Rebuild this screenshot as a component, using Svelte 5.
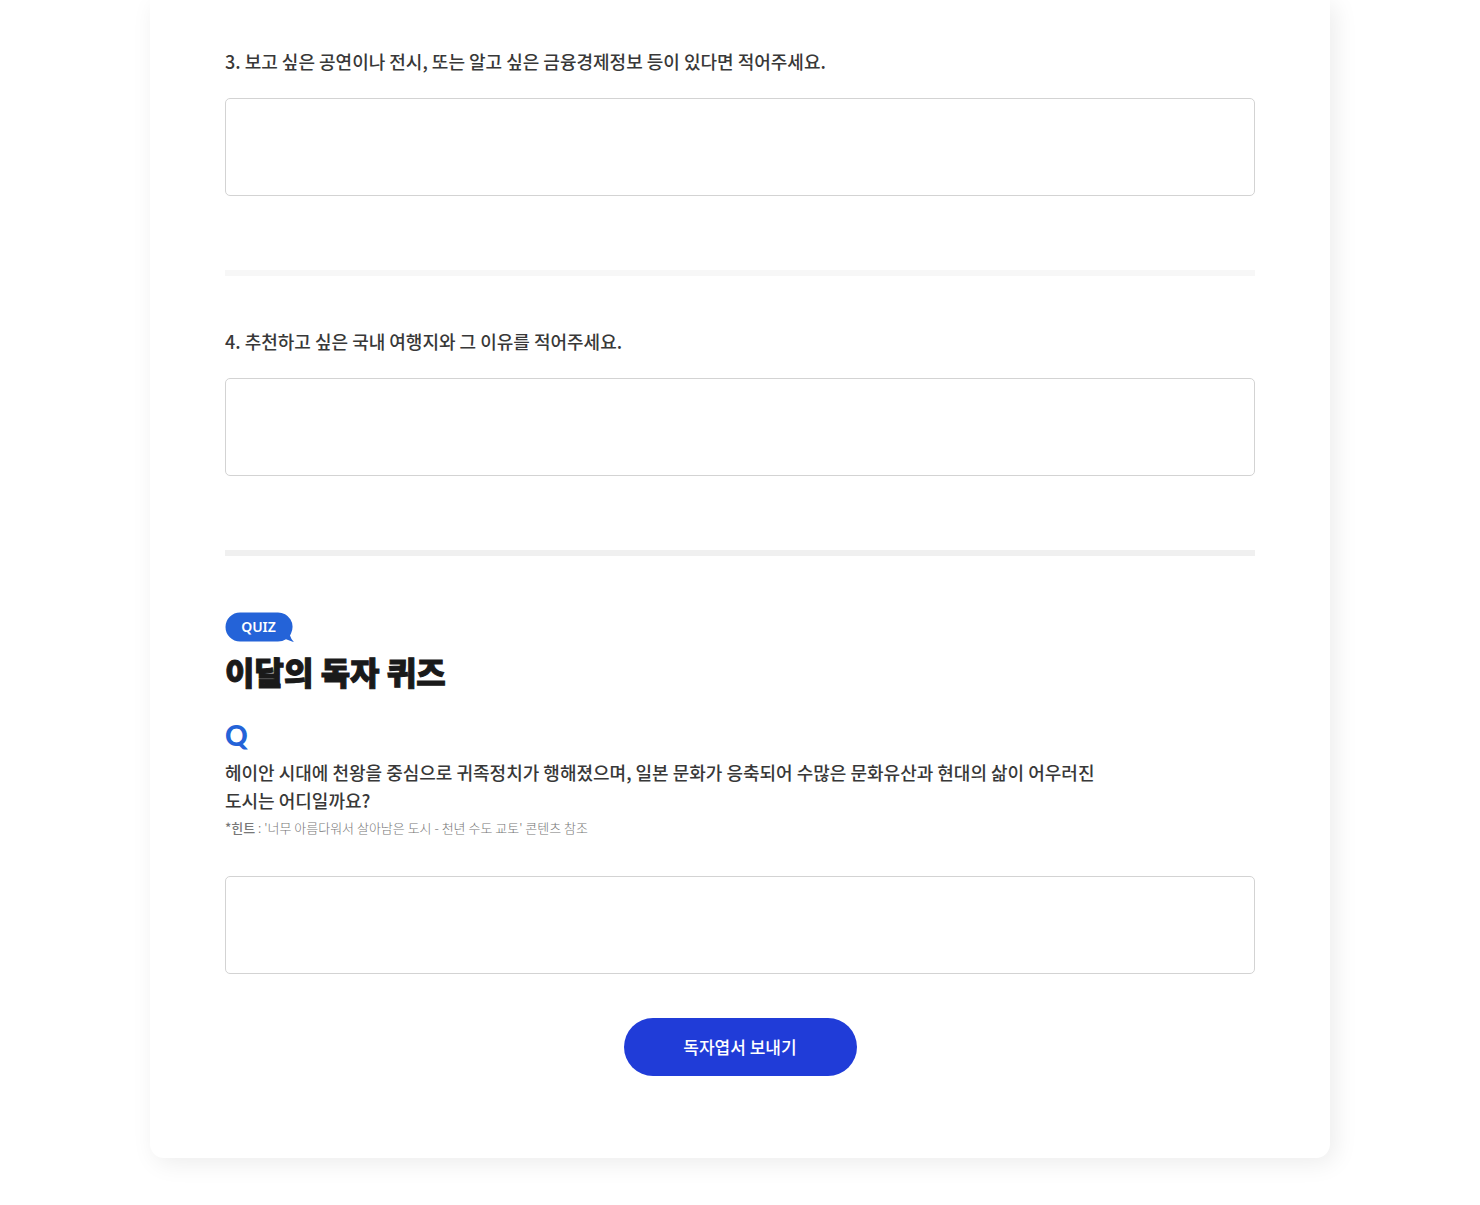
<script>

let answers = $state({ "q3": "", "q4": "", "quiz": "" })

let questions = [
    { "id": "q3", "title": "3. 보고 싶은 공연이나 전시, 또는 알고 싶은 금융경제정보 등이 있다면 적어주세요.", "last": false },
    { "id": "q4", "title": "4. 추천하고 싶은 국내 여행지와 그 이유를 적어주세요.", "last": true }
]

function send_card(event) {
    event.preventDefault()
    answers = { "q3": "", "q4": "", "quiz": "" }
}

</script>

<main class="page">
    <form class="card" onsubmit={send_card}>
        {#each questions as question }
            <section class="question" class:last={question.last}>
                <label class="question-title" for={question.id}>{question.title}</label>
                <textarea id={question.id} bind:value={answers[question.id]}></textarea>
            </section>
        {/each}

        <section class="quiz">
            <div class="badge">
                <svg class="bubble" viewBox="0 0 69 30" aria-hidden="true">
                    <path d="M15 0.500H53A14.500 14.500 0 0 1 66 21.500L65 23.500Q66.200 27.500 69 30.200L61 27.300Q57.500 29.500 53 29.500H15A14.500 14.500 0 0 1 15 0.500Z" fill="#2463d8" />
                </svg>
                <span class="badge-text">QUIZ</span>
            </div>
            <h2>이달의 독자 퀴즈</h2>
            <div class="mark">Q</div>
            <label class="quiz-title" for="quiz">헤이안 시대에 천왕을 중심으로 귀족정치가 행해졌으며, 일본 문화가 응축되어 수많은 문화유산과 현대의 삶이 어우러진 도시는 어디일까요?</label>
            <p class="hint"><strong>*힌트</strong> : '너무 아름다워서 살아남은 도시 - 천년 수도 교토' 콘텐츠 참조</p>
            <textarea id="quiz" bind:value={answers["quiz"]}></textarea>
        </section>

        <button type="submit">독자엽서 보내기</button>
    </form>
</main>

<style>

    :global(body) {
        margin: 0;
        background-color: #fff;
    }

    .page {
        padding: 0 24px 47px;
        overflow: hidden;
        color: #383838;
        font-family: "Noto Sans CJK KR", "Noto Sans", sans-serif;
        word-break: keep-all;
    }

    .card {
        box-sizing: border-box;
        display: flex;
        flex-direction: column;
        max-width: 1180px;
        margin: 0 auto;
        padding: 47px 75px 82px;
        border-radius: 0 0 14px 14px;
        box-shadow: 5px 5px 24px rgba(0, 0, 0, 0.08);
    }

    .question {
        display: flex;
        flex-direction: column;
        gap: 23px;
        margin-bottom: 51px;
        padding-bottom: 74px;
        border-bottom: 6px solid #f7f7f7;
    }

    .question.last {
        border-bottom-color: #f0f0f0;
    }

    .question-title,
    .quiz-title {
        font-size: 18px;
        font-weight: 500;
        line-height: 28px;
    }

    textarea {
        box-sizing: border-box;
        width: 100%;
        height: 98px;
        padding: 12px;
        border: 1px solid #d3d3d3;
        border-radius: 5px;
        background-color: #fff;
        color: #383838;
        font: inherit;
        font-size: 18px;
        resize: none;
    }

    .quiz {
        display: flex;
        flex-direction: column;
        margin-top: 5px;
    }

    .badge {
        display: grid;
        width: 69px;
        height: 30px;
    }

    .bubble,
    .badge-text {
        grid-area: 1 / 1;
    }

    .badge-text {
        padding-right: 2px;
        color: #fff;
        font-family: "Noto Sans", sans-serif;
        font-size: 14px;
        font-weight: 600;
        line-height: 30px;
        text-align: center;
    }

    h2 {
        margin: 5px 0 0;
        color: #1a1a1a;
        font-size: 32px;
        font-weight: 900;
        line-height: 48px;
        -webkit-text-stroke: 1px #1a1a1a;
    }

    .mark {
        margin-top: 22px;
        color: #2463d8;
        font-family: Lato, sans-serif;
        font-size: 28px;
        font-weight: 900;
        line-height: 36px;
    }

    .quiz-title {
        max-width: 880px;
        margin-top: 5px;
    }

    .hint {
        margin: 0 0 34px;
        color: #777;
        font-size: 13px;
        font-weight: 300;
        line-height: 28px;
    }

    .hint strong {
        font-weight: 500;
    }

    button {
        align-self: center;
        width: 233px;
        height: 58px;
        margin-top: 44px;
        padding: 0 0 2px;
        border: none;
        border-radius: 29px;
        background-color: #203cd8;
        color: #fff;
        font-family: inherit;
        font-size: 17px;
        font-weight: 500;
        cursor: pointer;
    }

</style>
